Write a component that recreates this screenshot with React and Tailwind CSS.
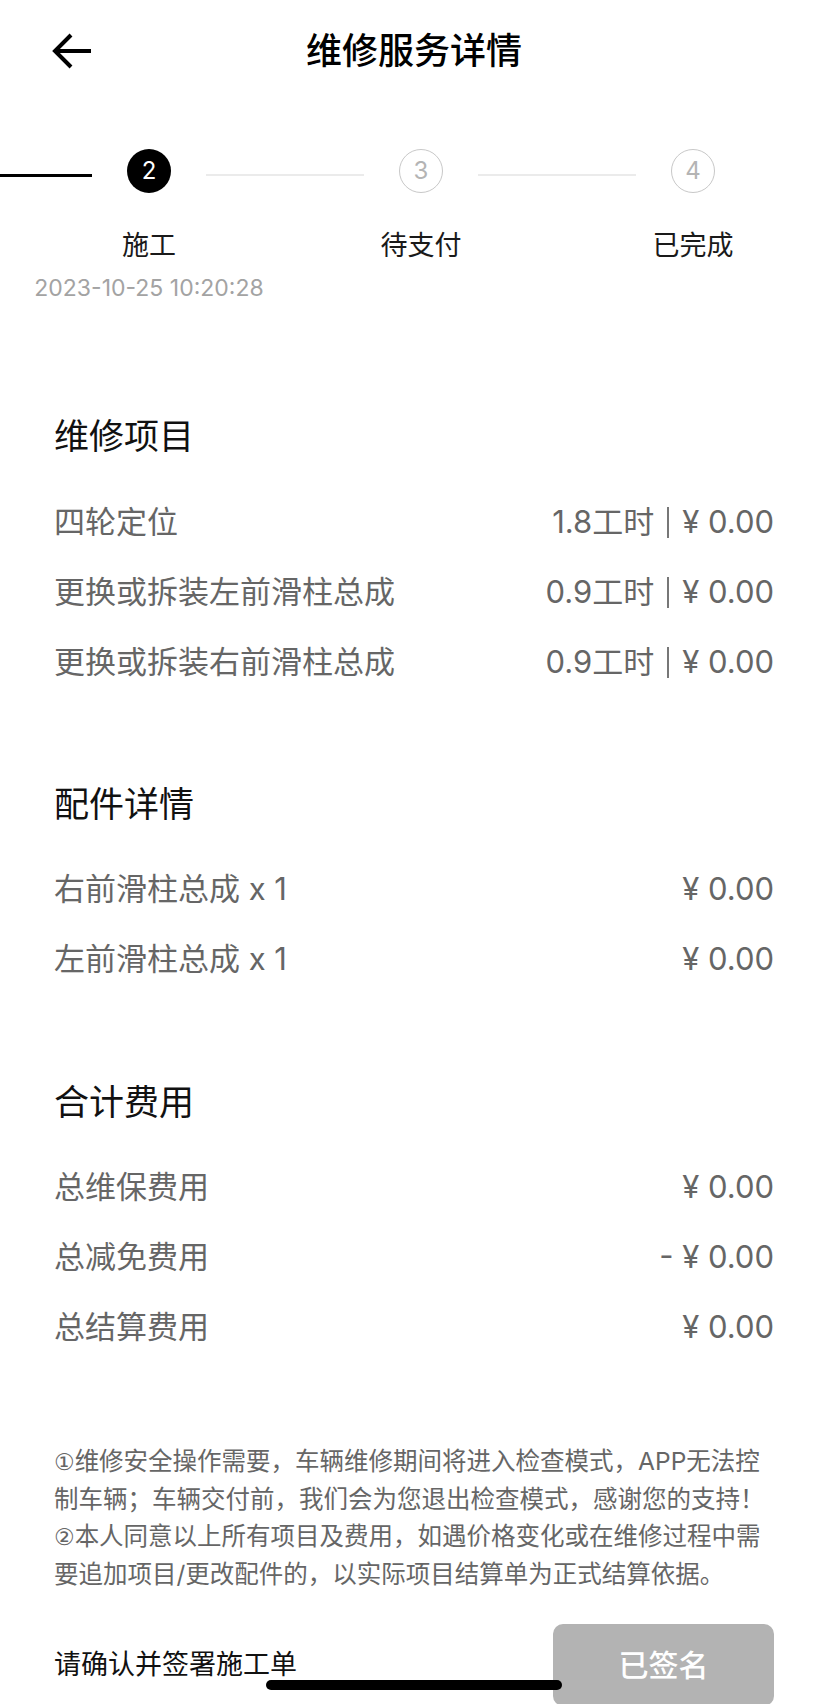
import { Fragment } from 'react';

const steps = [
  { n: 1, label: '', state: 'done' },
  { n: 2, label: '施工', time: '2023-10-25 10:20:28', state: 'active' },
  { n: 3, label: '待支付', state: 'todo' },
  { n: 4, label: '已完成', state: 'todo' },
];

const repairItems = [
  { name: '四轮定位', hours: '1.8工时', price: '¥ 0.00' },
  { name: '更换或拆装左前滑柱总成', hours: '0.9工时', price: '¥ 0.00' },
  { name: '更换或拆装右前滑柱总成', hours: '0.9工时', price: '¥ 0.00' },
];

const parts = [
  { name: '右前滑柱总成 x 1', value: '¥ 0.00' },
  { name: '左前滑柱总成 x 1', value: '¥ 0.00' },
];

const totals = [
  { name: '总维保费用', value: '¥ 0.00' },
  { name: '总减免费用', value: '- ¥ 0.00' },
  { name: '总结算费用', value: '¥ 0.00' },
];

const notes = [
  { mark: '①', text: '维修安全操作需要，车辆维修期间将进入检查模式，APP无法控' },
  { text: '制车辆；车辆交付前，我们会为您退出检查模式，感谢您的支持！' },
  { mark: '②', text: '本人同意以上所有项目及费用，如遇价格变化或在维修过程中需' },
  { text: '要追加项目/更改配件的，以实际项目结算单为正式结算依据。' },
];

function StepCircle({ step }) {
  if (step.state === 'todo') {
    return (
      <div className="flex h-[44px] w-[44px] shrink-0 items-center justify-center rounded-full border-[1.5px] border-[#c8c8c8] text-[24px] text-[#b4b4b4]">
        {step.n}
      </div>
    );
  }
  return (
    <div className="flex h-[44px] w-[44px] shrink-0 items-center justify-center rounded-full bg-black text-[24px] text-white">
      {step.state === 'active' ? step.n : null}
    </div>
  );
}

function Stepper() {
  return (
    <div className="mt-[47px] overflow-hidden">
      <div className="-ml-[145px] flex items-center">
        {steps.map((s, i) => (
          <Fragment key={s.n}>
            {i > 0 &&
              (s.state === 'todo' ? (
                <div className="mx-[35px] mt-[8px] h-[2px] w-[158px] shrink-0 bg-[#ebebeb]" />
              ) : (
                <div className="mx-[35px] mt-[8px] h-[3px] w-[158px] shrink-0 bg-black" />
              ))}
            <StepCircle step={s} />
          </Fragment>
        ))}
      </div>
      <div className="-ml-[259px] flex items-start">
        {steps.map((s) => (
          <div key={s.n} className="flex w-[272px] shrink-0 flex-col items-center">
            <span className="mt-[38px] h-[30px] text-[27px] leading-[30px] text-[#1a1a1a]">{s.label}</span>
            {s.time && (
              <span className="mt-[14px] whitespace-nowrap text-[23px] leading-[26px] text-[#a3a3a3]">
                {s.time}
              </span>
            )}
          </div>
        ))}
      </div>
    </div>
  );
}

function SectionTitle({ children }) {
  return <h2 className="text-[35px] leading-[40px] text-[#111]">{children}</h2>;
}

function Row({ left, right }) {
  return (
    <div className="flex h-[70px] items-center justify-between text-[31px] text-[#666]">
      <span>{left}</span>
      <span className="whitespace-nowrap">{right}</span>
    </div>
  );
}

export default function App() {
  return (
    <div className="relative min-h-[1704px] w-full overflow-hidden bg-white font-['Inter','Noto_Sans_CJK_SC',sans-serif]">
      {/* Header */}
      <div className="grid h-[102px] grid-cols-[1fr_auto_1fr] items-center px-[52px]">
        <svg width="42" height="36" viewBox="0 0 42 36" fill="none" stroke="black" strokeWidth="4">
          <path d="M3 18 H39" />
          <path d="M19 2 L3 18 L19 34" strokeLinejoin="miter" />
        </svg>
        <h1 className="text-[36px] font-medium text-black">维修服务详情</h1>
        <div />
      </div>

      <Stepper />

      <div className="px-[54px]">
        {/* 维修项目 */}
        <div className="mt-[115px]">
          <SectionTitle>维修项目</SectionTitle>
          <div className="mt-[31px]">
            {repairItems.map((it) => (
              <Row
                key={it.name}
                left={it.name}
                right={
                  <>
                    {it.hours}
                    <span className="mx-[13px] inline-block h-[31px] w-[2px] translate-y-[5px] bg-[#777]" />
                    {it.price}
                  </>
                }
              />
            ))}
          </div>
        </div>

        {/* 配件详情 */}
        <div className="mt-[87px]">
          <SectionTitle>配件详情</SectionTitle>
          <div className="mt-[30px]">
            {parts.map((p) => (
              <Row key={p.name} left={p.name} right={p.value} />
            ))}
          </div>
        </div>

        {/* 合计费用 */}
        <div className="mt-[88px]">
          <SectionTitle>合计费用</SectionTitle>
          <div className="mt-[30px]">
            {totals.map((t) => (
              <Row key={t.name} left={t.name} right={t.value} />
            ))}
          </div>
        </div>

        {/* Notes */}
        <div className="mt-[81px] text-[24.5px] leading-[37px] text-[#666]">
          {notes.map((line) => (
            <div key={line.text} className="whitespace-nowrap">
              {line.mark && (
                <span className="font-['DejaVu_Sans',sans-serif] text-[23px]">{line.mark}</span>
              )}
              {line.text}
            </div>
          ))}
        </div>

        {/* Sign bar */}
        <div className="mt-[31px] flex items-center justify-between">
          <span className="text-[27px] text-[#111]">请确认并签署施工单</span>
          <button className="flex h-[82px] w-[221px] items-center justify-center rounded-[10px] bg-[#b3b3b3] text-[30px] font-medium text-white">
            已签名
          </button>
        </div>
      </div>

      {/* home indicator */}
      <div className="absolute bottom-[16px] left-1/2 h-[10px] w-[296px] -translate-x-1/2 rounded-full bg-black" />
    </div>
  );
}
